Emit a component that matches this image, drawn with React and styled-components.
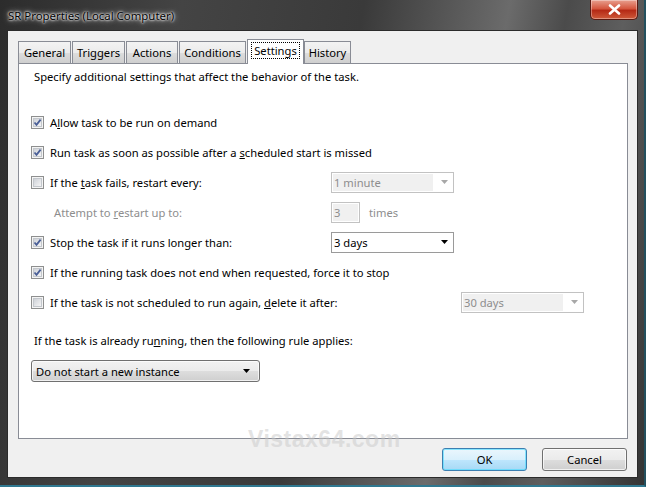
import React from "react";
import styled, { createGlobalStyle } from "styled-components";

const GlobalStyle = createGlobalStyle`
  html, body {
    margin: 0;
    padding: 0;
    background: #1c2a30;
  }
  body {
    font-family: "Noto Sans", "Open Sans", sans-serif;
    font-size: 11.2px;
    color: #000;
  }
`;

const Window = styled.div`
  position: relative;
  width: 646px;
  height: 487px;
  box-sizing: border-box;
  display: flex;
  flex-direction: column;
  padding: 0 6px 7px 7px;
  background: linear-gradient(
    100deg,
    #2c2c2c 0%,
    #444 25%,
    #3a3a3a 50%,
    #6b6b6b 70%,
    #4b4b4b 78%,
    #5e5e5e 86%,
    #343434 100%
  );
  border-right: 2px solid #23505e;
  border-bottom: 2px solid #2f7890;
`;

const TitleBar = styled.div`
  height: 30px;
  display: flex;
  justify-content: space-between;
  align-items: flex-start;
  flex-shrink: 0;
`;

const Title = styled.div`
  padding: 8px 0 0 1px;
  line-height: 16px;
  font-size: 11.4px;
  color: #000;
  text-shadow: 0 0 6px #fff, 0 0 3px #fff, 0 0 2px #fff;
`;

const CloseButton = styled.div`
  width: 48px;
  height: 20px;
  box-sizing: border-box;
  display: flex;
  align-items: center;
  justify-content: center;
  border: 1px solid #5a1a12;
  border-top: none;
  border-radius: 0 0 5px 5px;
  background: linear-gradient(#e8a08f 0%, #d5573f 45%, #b52a16 55%, #cf5a3a 100%);
  box-shadow: inset 0 0 0 1px rgba(255, 255, 255, 0.35);
`;

const Body = styled.div`
  flex: 1;
  display: flex;
  flex-direction: column;
  background: #f0f0f0;
  border: 1px solid #2b2b2b;
  padding: 8px 10px 0 10px;
`;

const TabStrip = styled.div`
  display: flex;
  align-items: flex-end;
  gap: 1px;
  height: 25px;
  margin-bottom: -1px;
  position: relative;
  z-index: 1;
`;

const Tab = styled.div`
  width: ${(p) => p.$w}px;
  height: ${(p) => (p.$active ? 25 : 23)}px;
  box-sizing: border-box;
  display: flex;
  align-items: center;
  justify-content: center;
  border: 1px solid #898c95;
  border-bottom: ${(p) => (p.$active ? "none" : "1px solid #898c95")};
  margin-right: ${(p) => (p.$active ? "-1px" : "0")};
  background: ${(p) =>
    p.$active ? "#fff" : "linear-gradient(#f3f3f3 0%, #ebebeb 50%, #dddddd 51%, #cfcfcf 100%)"};
  position: relative;
  z-index: ${(p) => (p.$active ? 2 : 1)};
  padding-bottom: ${(p) => (p.$active ? "3px" : "0")};
`;

const TabLabel = styled.span`
  line-height: 15px;
  padding: 0 2px;
  border: 1px dotted ${(p) => (p.$focus ? "#000" : "transparent")};
`;

const Panel = styled.div`
  width: 610px;
  height: 376px;
  box-sizing: border-box;
  background: #fff;
  border: 1px solid #898c95;
  padding: 5px 0 0 12px;
  display: flex;
  flex-direction: column;
`;

const Note = styled.div`
  line-height: 16px;
  padding-left: 3px;
  margin-top: ${(p) => p.$top || 0}px;
`;

const Rows = styled.div`
  margin-top: 22px;
  display: flex;
  flex-direction: column;
`;

const Row = styled.div`
  height: 30px;
  display: grid;
  grid-template-columns: ${(p) => p.$split || 300}px auto;
  align-items: center;
`;

const Check = styled.div`
  display: flex;
  align-items: center;
  gap: 6px;
  padding-left: ${(p) => p.$indent || 0}px;
  color: ${(p) => (p.$disabled ? "#8d8d8d" : "#000")};
  white-space: nowrap;
  grid-column: ${(p) => (p.$wide ? "1 / -1" : "auto")};
`;

const Box = styled.svg`
  flex-shrink: 0;
  display: block;
`;

const Key = styled.span`
  text-decoration: underline;
`;

const Combo = styled.div`
  width: 123px;
  height: 21px;
  box-sizing: border-box;
  display: flex;
  align-items: center;
  padding: 1px;
  border: 1px solid ${(p) => (p.$disabled ? "#c2c2c2" : "#9a9a9a")};
  background: #fff;
  color: ${(p) => (p.$disabled ? "#8d8d8d" : "#000")};
`;

const ComboText = styled.div`
  flex: 1;
  height: 100%;
  display: flex;
  align-items: center;
  padding-left: 1px;
  background: ${(p) => (p.$disabled ? "#f0f0f0" : "#fff")};
  margin-right: 3px;
`;

const ComboArrow = styled.div`
  width: 16px;
  display: flex;
  justify-content: center;
`;

const Spin = styled.div`
  display: flex;
  align-items: center;
  gap: 9px;
  color: #8d8d8d;
`;

const SpinBox = styled.div`
  width: 29px;
  height: 21px;
  box-sizing: border-box;
  border: 1px solid #c2c2c2;
  padding: 1px;
  background: #fff;
  display: flex;
`;

const SpinInner = styled.div`
  flex: 1;
  background: #f0f0f0;
  display: flex;
  align-items: center;
  padding-left: 1px;
`;

const DropButton = styled.div`
  margin-top: 11px;
  width: 229px;
  height: 22px;
  box-sizing: border-box;
  display: flex;
  align-items: center;
  justify-content: space-between;
  padding: 0 9px 0 4px;
  border: 1px solid #707070;
  border-radius: 3px;
  background: linear-gradient(#f2f2f2 0%, #ebebeb 50%, #dddddd 51%, #cfcfcf 100%);
  box-shadow: inset 0 0 0 1px rgba(255, 255, 255, 0.7);
`;

const Footer = styled.div`
  display: flex;
  justify-content: flex-end;
  gap: 15px;
  padding: 9px 0 0 0;
`;

const Button = styled.div`
  width: 85px;
  height: 23px;
  box-sizing: border-box;
  display: flex;
  align-items: center;
  justify-content: center;
  border: 1px solid ${(p) => (p.$default ? "#3c7fb1" : "#707070")};
  border-radius: 3px;
  background: ${(p) =>
    p.$default
      ? "linear-gradient(#eaf6fd 0%, #d9f0fc 50%, #bee6fd 51%, #a7d9f5 100%)"
      : "linear-gradient(#f2f2f2 0%, #ebebeb 50%, #dddddd 51%, #cfcfcf 100%)"};
  box-shadow: inset 0 0 0 1px ${(p) => (p.$default ? "rgba(72, 220, 255, 0.6)" : "rgba(255, 255, 255, 0.7)")};
`;

const Watermark = styled.div`
  position: absolute;
  left: 248px;
  top: 426px;
  font-family: "Liberation Sans", Arial, sans-serif;
  font-weight: bold;
  font-size: 23px;
  letter-spacing: 0.5px;
  color: rgba(200, 200, 200, 0.5);
  pointer-events: none;
`;

function CheckBox({ checked }) {
  return (
    <Box width="13" height="13" viewBox="0 0 13 13">
      <defs>
        <linearGradient id="cbfill" x1="0" y1="0" x2="1" y2="1">
          <stop offset="0" stopColor="#cbcfd5" />
          <stop offset="1" stopColor="#f7f7f7" />
        </linearGradient>
      </defs>
      <rect x="0.5" y="0.5" width="12" height="12" fill="#f4f4f4" stroke="#8e8f8f" />
      <rect x="2.5" y="2.5" width="8" height="8" fill="url(#cbfill)" stroke="#c3c7cc" />
      {checked && (
        <path d="M3.5 6.5 L5.5 8.8 L9.6 3.6" fill="none" stroke="#4a5f97" strokeWidth="1.8" />
      )}
    </Box>
  );
}

function Arrow({ color }) {
  return (
    <svg width="7" height="4" viewBox="0 0 7 4">
      <path d="M0 0 H7 L3.5 4 Z" fill={color} />
    </svg>
  );
}

function Dropdown({ value, disabled }) {
  return (
    <Combo $disabled={disabled}>
      <ComboText $disabled={disabled}>{value}</ComboText>
      <ComboArrow>
        <Arrow color={disabled ? "#a8a8a8" : "#000"} />
      </ComboArrow>
    </Combo>
  );
}

const tabs = [
  { label: "General", w: 53 },
  { label: "Triggers", w: 53 },
  { label: "Actions", w: 52 },
  { label: "Conditions", w: 67 },
  { label: "Settings", w: 57, active: true },
  { label: "History", w: 47 },
];

export default function App() {
  return (
    <>
      <GlobalStyle />
      <Window>
        <TitleBar>
          <Title>SR Properties (Local Computer)</Title>
          <CloseButton>
            <svg width="13" height="11" viewBox="0 0 13 11">
              <path d="M2 1.5 L11 9.5 M11 1.5 L2 9.5" stroke="#fff" strokeWidth="2.6" strokeLinecap="round" />
            </svg>
          </CloseButton>
        </TitleBar>
        <Body>
          <TabStrip>
            {tabs.map((t) => (
              <Tab key={t.label} $w={t.w} $active={t.active}>
                <TabLabel $focus={t.active}>{t.label}</TabLabel>
              </Tab>
            ))}
          </TabStrip>
          <Panel>
            <Note>Specify additional settings that affect the behavior of the task.</Note>
            <Rows>
              <Row>
                <Check $wide>
                  <CheckBox checked />
                  <span>
                    A<Key>l</Key>low task to be run on demand
                  </span>
                </Check>
              </Row>
              <Row>
                <Check $wide>
                  <CheckBox checked />
                  <span>
                    Run task as soon as possible after a <Key>s</Key>cheduled start is missed
                  </span>
                </Check>
              </Row>
              <Row>
                <Check>
                  <CheckBox />
                  <span>
                    If the <Key>t</Key>ask fails, restart every:
                  </span>
                </Check>
                <Dropdown value="1 minute" disabled />
              </Row>
              <Row>
                <Check $indent={23} $disabled>
                  <span>
                    Attempt to <Key>r</Key>estart up to:
                  </span>
                </Check>
                <Spin>
                  <SpinBox>
                    <SpinInner>3</SpinInner>
                  </SpinBox>
                  <span>times</span>
                </Spin>
              </Row>
              <Row>
                <Check>
                  <CheckBox checked />
                  <span>Stop the task if it runs longer than:</span>
                </Check>
                <Dropdown value="3 days" />
              </Row>
              <Row>
                <Check $wide>
                  <CheckBox checked />
                  <span>If the running task does not end when requested, force it to stop</span>
                </Check>
              </Row>
              <Row $split={430}>
                <Check>
                  <CheckBox />
                  <span>
                    If the task is not scheduled to run again, <Key>d</Key>elete it after:
                  </span>
                </Check>
                <Dropdown value="30 days" disabled />
              </Row>
            </Rows>
            <Note $top={16}>
              If the task is already ru<Key>n</Key>ning, then the following rule applies:
            </Note>
            <DropButton>
              <span>Do not start a new instance</span>
              <Arrow color="#000" />
            </DropButton>
          </Panel>
          <Footer>
            <Button $default>OK</Button>
            <Button>Cancel</Button>
          </Footer>
        </Body>
        <Watermark>Vistax64.com</Watermark>
      </Window>
    </>
  );
}
